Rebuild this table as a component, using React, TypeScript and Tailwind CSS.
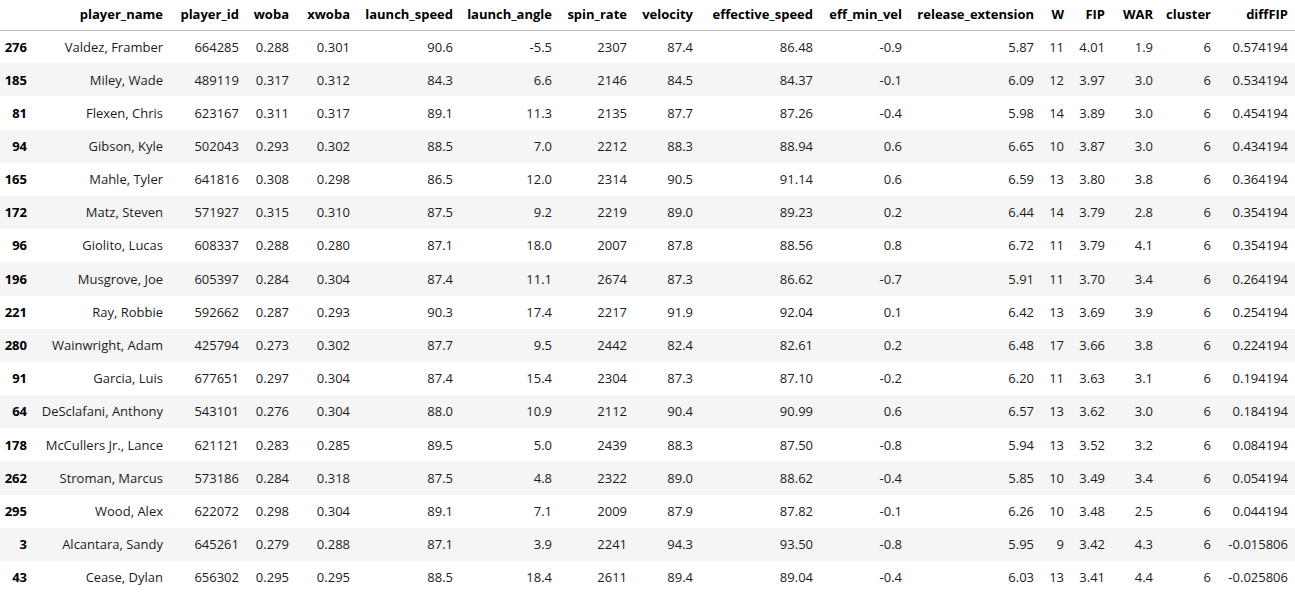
const columns = [
  { name: '', w: 'w-[34px]' },
  { name: 'player_name', w: 'w-[136px]' },
  { name: 'player_id', w: 'w-[76px]' },
  { name: 'woba', w: 'w-[50px]' },
  { name: 'xwoba', w: 'w-[61px]' },
  { name: 'launch_speed', w: 'w-[103px]' },
  { name: 'launch_angle', w: 'w-[99px]' },
  { name: 'spin_rate', w: 'w-[75px]' },
  { name: 'velocity', w: 'w-[66px]' },
  { name: 'effective_speed', w: 'w-[120px]' },
  { name: 'eff_min_vel', w: 'w-[89px]' },
  { name: 'release_extension', w: 'w-[132px]' },
  { name: 'W', w: 'w-[30px]' },
  { name: 'FIP', w: 'w-[41px]' },
  { name: 'WAR', w: 'w-[48px]' },
  { name: 'cluster', w: 'w-[58px]' },
  { name: 'diffFIP', w: 'w-[77px]' },
]

const rows: string[][] = [
  ['276', 'Valdez, Framber', '664285', '0.288', '0.301', '90.6', '-5.5', '2307', '87.4', '86.48', '-0.9', '5.87', '11', '4.01', '1.9', '6', '0.574194'],
  ['185', 'Miley, Wade', '489119', '0.317', '0.312', '84.3', '6.6', '2146', '84.5', '84.37', '-0.1', '6.09', '12', '3.97', '3.0', '6', '0.534194'],
  ['81', 'Flexen, Chris', '623167', '0.311', '0.317', '89.1', '11.3', '2135', '87.7', '87.26', '-0.4', '5.98', '14', '3.89', '3.0', '6', '0.454194'],
  ['94', 'Gibson, Kyle', '502043', '0.293', '0.302', '88.5', '7.0', '2212', '88.3', '88.94', '0.6', '6.65', '10', '3.87', '3.0', '6', '0.434194'],
  ['165', 'Mahle, Tyler', '641816', '0.308', '0.298', '86.5', '12.0', '2314', '90.5', '91.14', '0.6', '6.59', '13', '3.80', '3.8', '6', '0.364194'],
  ['172', 'Matz, Steven', '571927', '0.315', '0.310', '87.5', '9.2', '2219', '89.0', '89.23', '0.2', '6.44', '14', '3.79', '2.8', '6', '0.354194'],
  ['96', 'Giolito, Lucas', '608337', '0.288', '0.280', '87.1', '18.0', '2007', '87.8', '88.56', '0.8', '6.72', '11', '3.79', '4.1', '6', '0.354194'],
  ['196', 'Musgrove, Joe', '605397', '0.284', '0.304', '87.4', '11.1', '2674', '87.3', '86.62', '-0.7', '5.91', '11', '3.70', '3.4', '6', '0.264194'],
  ['221', 'Ray, Robbie', '592662', '0.287', '0.293', '90.3', '17.4', '2217', '91.9', '92.04', '0.1', '6.42', '13', '3.69', '3.9', '6', '0.254194'],
  ['280', 'Wainwright, Adam', '425794', '0.273', '0.302', '87.7', '9.5', '2442', '82.4', '82.61', '0.2', '6.48', '17', '3.66', '3.8', '6', '0.224194'],
  ['91', 'Garcia, Luis', '677651', '0.297', '0.304', '87.4', '15.4', '2304', '87.3', '87.10', '-0.2', '6.20', '11', '3.63', '3.1', '6', '0.194194'],
  ['64', 'DeSclafani, Anthony', '543101', '0.276', '0.304', '88.0', '10.9', '2112', '90.4', '90.99', '0.6', '6.57', '13', '3.62', '3.0', '6', '0.184194'],
  ['178', 'McCullers Jr., Lance', '621121', '0.283', '0.285', '89.5', '5.0', '2439', '88.3', '87.50', '-0.8', '5.94', '13', '3.52', '3.2', '6', '0.084194'],
  ['262', 'Stroman, Marcus', '573186', '0.284', '0.318', '87.5', '4.8', '2322', '89.0', '88.62', '-0.4', '5.85', '10', '3.49', '3.4', '6', '0.054194'],
  ['295', 'Wood, Alex', '622072', '0.298', '0.304', '89.1', '7.1', '2009', '87.9', '87.82', '-0.1', '6.26', '10', '3.48', '2.5', '6', '0.044194'],
  ['3', 'Alcantara, Sandy', '645261', '0.279', '0.288', '87.1', '3.9', '2241', '94.3', '93.50', '-0.8', '5.95', '9', '3.42', '4.3', '6', '-0.015806'],
  ['43', 'Cease, Dylan', '656302', '0.295', '0.295', '88.5', '18.4', '2611', '89.4', '89.04', '-0.4', '6.03', '13', '3.41', '4.4', '6', '-0.025806'],
]

export default function App() {
  return (
    <div className="bg-white w-[1295px] h-[592px] overflow-hidden font-['Segoe_UI','Open_Sans',sans-serif] text-[13px] text-[#1c1c1c]">
      <table className="table-fixed border-collapse w-[1295px]">
        <colgroup>
          {columns.map((c, i) => (
            <col key={i} className={c.w} />
          ))}
        </colgroup>
        <thead className="border-b border-[#bdbdbd]">
          <tr className="h-[30px]">
            {columns.map((c, i) => (
              <th key={i} className="text-right font-bold text-black pr-[7px] whitespace-nowrap">
                {c.name}
              </th>
            ))}
          </tr>
        </thead>
        <tbody>
          {rows.map((r, ri) => (
            <tr key={ri} className={ri % 2 === 1 ? 'h-[33.2px] bg-[#f5f5f5]' : 'h-[33.2px]'}>
              {r.map((v, ci) =>
                ci === 0 ? (
                  <th key={ci} className="text-right font-bold text-black pr-[7px] pt-px">
                    {v}
                  </th>
                ) : (
                  <td key={ci} className="text-right pr-[7px] pt-px whitespace-nowrap">
                    {v}
                  </td>
                )
              )}
            </tr>
          ))}
        </tbody>
      </table>
    </div>
  )
}
